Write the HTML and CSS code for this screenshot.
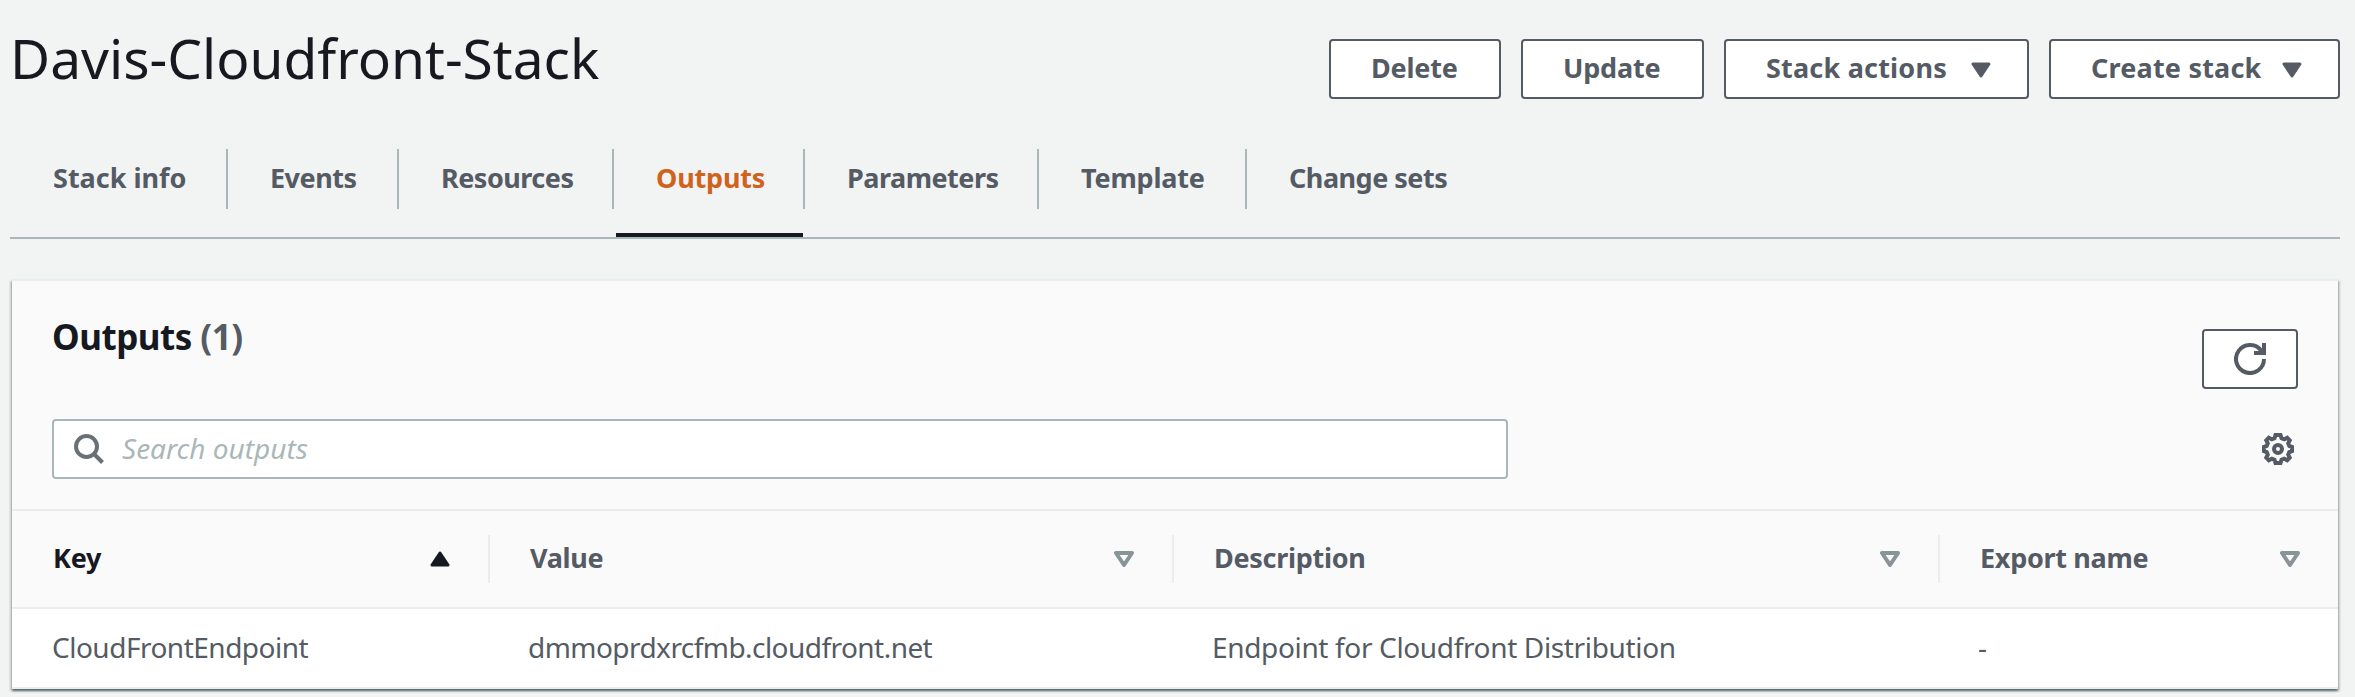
FILE: index.html
```html
<!DOCTYPE html>
<html lang="en">
<head>
<meta charset="utf-8">
<title>Davis-Cloudfront-Stack</title>
<link rel="stylesheet" href="styles.css">
</head>
<body>
<header class="page-header">
  <h1 class="title">Davis-Cloudfront-Stack</h1>
  <div class="actions">
    <button class="btn btn-delete">Delete</button>
    <button class="btn btn-update">Update</button>
    <button class="btn btn-actions">Stack actions<svg class="caret" viewBox="0 0 20 16"><path d="M2 2h16l-8 12z"/></svg></button>
    <button class="btn btn-create">Create stack<svg class="caret" viewBox="0 0 20 16"><path d="M2 2h16l-8 12z"/></svg></button>
  </div>
</header>
<nav class="tabs">
  <a class="tab t-info"><span>Stack info</span></a>
  <a class="tab t-events"><span>Events</span></a>
  <a class="tab t-resources"><span>Resources</span></a>
  <a class="tab t-outputs active"><span>Outputs</span></a>
  <a class="tab t-params"><span>Parameters</span></a>
  <a class="tab t-template"><span>Template</span></a>
  <a class="tab t-change"><span>Change sets</span></a>
</nav>
<main class="panel">
  <div class="panel-head">
    <div class="head-row">
      <h2 class="heading">Outputs <span class="count">(1)</span></h2>
      <button class="refresh" aria-label="Refresh"><svg viewBox="0 0 32 32"><path d="M30 16A14 14 0 1 1 27.500 8"/><path d="M30 0v10H20"/></svg></button>
    </div>
    <div class="filter-row">
      <label class="search">
        <svg viewBox="0 0 30 30"><circle cx="12.500" cy="12.500" r="10.500"/><path d="M20 20l8.500 8.500"/></svg>
        <input class="search-input" type="text" placeholder="Search outputs">
      </label>
      <svg class="gear" viewBox="0 0 32 32"><path d="M13.500 2h5l1 3.200 2.700 1.100 3-1.500 2.500 2.500-1.500 3 1.100 2.700 2.700 1v4l-2.700 1-1.100 2.700 1.500 3-2.500 2.500-3-1.500-2.700 1.100-1 3.200h-5l-1-3.200-2.700-1.100-3 1.500-2.500-2.500 1.500-3-1.100-2.700-2.700-1v-4l2.700-1 1.100-2.700-1.500-3 2.500-2.500 3 1.500 2.700-1.100z"/><circle cx="16" cy="16" r="4"/></svg>
    </div>
  </div>
  <table class="grid">
    <colgroup><col class="c-key"><col class="c-value"><col class="c-desc"><col class="c-export"></colgroup>
    <thead>
      <tr>
        <th><div class="th sorted"><span>Key</span><svg viewBox="0 0 20 16"><path d="M10 2l8 12H2z"/></svg></div></th>
        <th><div class="th"><span>Value</span><svg viewBox="0 0 20 16"><path d="M2 2h16l-8 12z"/></svg></div></th>
        <th><div class="th"><span>Description</span><svg viewBox="0 0 20 16"><path d="M2 2h16l-8 12z"/></svg></div></th>
        <th><div class="th"><span>Export name</span><svg viewBox="0 0 20 16"><path d="M2 2h16l-8 12z"/></svg></div></th>
      </tr>
    </thead>
    <tbody>
      <tr><td class="d-key">CloudFrontEndpoint</td><td class="d-value">dmmoprdxrcfmb.cloudfront.net</td><td class="d-desc">Endpoint for Cloudfront Distribution</td><td>-</td></tr>
    </tbody>
  </table>
</main>
</body>
</html>
```
FILE: styles.css
```css
* { box-sizing: border-box; }
body {
  margin: 0;
  height: 697px;
  overflow: hidden;
  background: #f2f3f3;
  color: #545b64;
  font: 28px/40px "Noto Sans", "Open Sans", sans-serif;
}
h1, h2 { margin: 0; }
.page-header {
  display: flex;
  justify-content: space-between;
  height: 149px;
  padding: 0 15px 0 10px;
}
.title {
  padding-top: 22px;
  color: #16191f;
  font-size: 55px;
  font-weight: 400;
  line-height: 72px;
}
.actions { display: flex; gap: 20px; padding-top: 39px; }
.btn, .refresh {
  height: 60px;
  border: 2px solid #545b64;
  border-radius: 4px;
  background: #fff;
  color: #545b64;
}
.btn {
  display: flex;
  align-items: center;
  justify-content: space-between;
  padding: 0 36px 3px 40px;
  font: 700 27px/40px "Noto Sans", "Open Sans", sans-serif;
  letter-spacing: .2px;
  white-space: nowrap;
}
.btn-delete { width: 172px; letter-spacing: -.2px; }
.btn-update { width: 183px; letter-spacing: -.2px; }
.btn-actions { width: 305px; }
.btn-create { width: 291px; }
.caret {
  width: 20px;
  height: 16px;
  margin-top: 4px;
  fill: #545b64;
  stroke: #545b64;
  stroke-width: 3;
  stroke-linejoin: round;
}
.tabs {
  display: flex;
  height: 90px;
  margin: 0 15px 0 10px;
  border-bottom: 2px solid #aab7b8;
}
.tab {
  height: 88px;
  font-size: 27px;
  font-weight: 700;
  letter-spacing: -.5px;
  white-space: nowrap;
}
.tab span {
  display: block;
  height: 60px;
  padding: 9px 0 0 42px;
  border-right: 2px solid #aab7b8;
}
.tab:last-child span { border-right: 0; }
.t-info { width: 218px; letter-spacing: 0; }
.t-info span { padding-left: 43px; }
.t-events { width: 171px; }
.t-resources { width: 215px; }
.t-outputs { width: 191px; letter-spacing: -.2px; }
.t-params { width: 234px; }
.t-template { width: 208px; letter-spacing: -.2px; }
.t-change { width: 240px; }
.active {
  color: #cf631e;
  background: linear-gradient(#16191f, #16191f) 2px 84px / 187px 4px no-repeat;
}
.panel {
  width: 2326px;
  height: 410px;
  margin: 40px 0 0 12px;
  border-top: 2px solid #eaeded;
  background: #fff;
  box-shadow: 0 2px 2px 0 rgba(0, 28, 36, .5), 2px 2px 2px 0 rgba(0, 28, 36, .15), -2px 2px 2px 0 rgba(0, 28, 36, .15);
}
.panel-head {
  height: 230px;
  padding: 34px 40px 0;
  border-bottom: 2px solid #eaeded;
  background: #fafafa;
}
.head-row { display: flex; justify-content: space-between; height: 104px; }
.heading {
  margin-top: -2px;
  color: #16191f;
  font-size: 35px;
  font-weight: 700;
  letter-spacing: -.5px;
  line-height: 48px;
}
.count { color: #545b64; }
.refresh { width: 96px; margin-top: 14px; padding: 0; }
.refresh svg {
  display: block;
  width: 32px;
  height: 32px;
  margin: 0 auto;
  fill: none;
  stroke: #545b64;
  stroke-width: 4;
}
.filter-row {
  display: flex;
  align-items: center;
  justify-content: space-between;
  height: 60px;
  padding-right: 4px;
}
.search {
  display: flex;
  align-items: center;
  gap: 18px;
  width: 1456px;
  height: 60px;
  padding: 0 20px;
  border: 2px solid #aab7b8;
  border-radius: 4px;
  background: #fff;
}
.search svg { width: 30px; height: 30px; fill: none; stroke: #687078; stroke-width: 4; }
.search-input {
  flex: 1;
  padding: 0 0 2px;
  border: 0;
  font: 28px/40px "Noto Sans", "Open Sans", sans-serif;
}
.search-input::placeholder { color: #aab7b8; font-style: italic; opacity: 1; }
.gear { width: 32px; height: 32px; fill: none; stroke: #545b64; stroke-width: 4; }
.grid { width: 2326px; table-layout: fixed; border-collapse: separate; border-spacing: 0; }
.c-key { width: 478px; }
.c-value { width: 684px; }
.c-desc { width: 766px; }
.c-export { width: 398px; }
th {
  height: 98px;
  padding: 0;
  border-bottom: 2px solid #eaeded;
  background: #fafafa;
  text-align: left;
}
.th {
  display: flex;
  align-items: center;
  justify-content: space-between;
  height: 48px;
  padding: 0 38px 0 40px;
  border-right: 2px solid #eaeded;
  font-size: 27px;
  font-weight: 700;
  letter-spacing: -.3px;
}
.th span { padding-bottom: 3px; }
th:last-child .th { border-right: 0; }
.th svg {
  width: 20px;
  height: 16px;
  fill: none;
  stroke: #879596;
  stroke-width: 4;
  stroke-linejoin: round;
}
.th.sorted { padding-left: 41px; color: #16191f; }
.th.sorted svg { fill: #16191f; stroke: #16191f; stroke-width: 3; }
td {
  height: 80px;
  padding: 0 0 2px 38px;
  border-bottom: 2px solid #eaeded;
  white-space: nowrap;
}
.d-key { padding-left: 40px; letter-spacing: -.5px; }
.d-value { letter-spacing: -.55px; }
.d-desc { letter-spacing: -.35px; }
```
